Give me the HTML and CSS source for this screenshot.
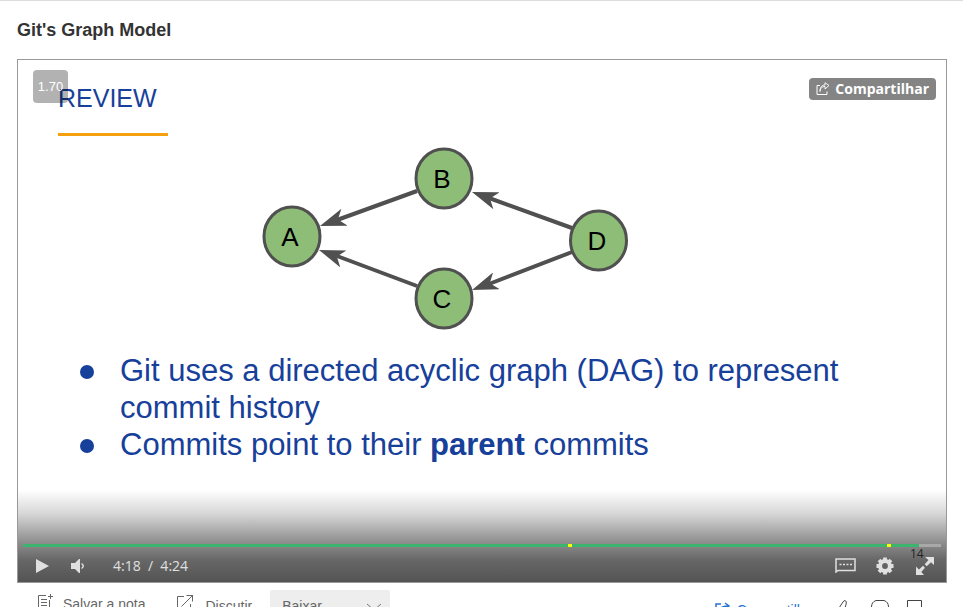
FILE: index.html
```html
<!DOCTYPE html>
<html lang="pt-BR">
<head>
<meta charset="utf-8">
<title>Git's Graph Model</title>
<link rel="stylesheet" href="styles.css">
</head>
<body>
<main class="lesson">
  <h1 class="lesson-title">Git's Graph Model</h1>

  <section class="player">
    <article class="slide">
      <h2 class="slide-title">REVIEW</h2>
      <svg class="graph" width="374" height="188" viewBox="258 144 374 188" role="img" aria-label="A, B, C, D">
        <defs>
          <marker id="arrow" viewBox="0 0 26 18" refX="26" refY="9" markerWidth="26" markerHeight="18" markerUnits="userSpaceOnUse" orient="auto">
            <path d="M0 0L26 9L0 18L7 9Z" fill="#505050"/>
          </marker>
        </defs>
        <g class="edges">
          <path d="M417 191L337 220"/>
          <path d="M417 286L337 256"/>
          <path d="M572 228L489 198"/>
          <path d="M572 252L489 284"/>
        </g>
        <g fill="none" stroke="none">
          <path d="M417 191L320 226" marker-end="url(#arrow)"/>
          <path d="M417 286L319 250" marker-end="url(#arrow)"/>
          <path d="M572 228L472 192" marker-end="url(#arrow)"/>
          <path d="M572 252L472 290" marker-end="url(#arrow)"/>
        </g>
        <g class="nodes">
          <ellipse cx="292" cy="236.500" rx="28" ry="29.500"/>
          <ellipse cx="444" cy="178.500" rx="28" ry="29.500"/>
          <ellipse cx="444" cy="298.500" rx="28" ry="29.500"/>
          <ellipse cx="598.500" cy="240.500" rx="28" ry="29.500"/>
        </g>
        <g class="labels">
          <text x="290" y="246">A</text>
          <text x="442" y="188">B</text>
          <text x="442" y="308">C</text>
          <text x="597" y="250">D</text>
        </g>
      </svg>
      <ul class="points">
        <li><p>Git uses a directed acyclic graph (DAG) to represent commit history</p></li>
        <li><p>Commits point to their <strong>parent</strong> commits</p></li>
      </ul>
    </article>

    <span class="speed">1.70</span>
    <button class="share" type="button">
      <svg width="14" height="14" viewBox="0 0 14 14" fill="none" stroke="currentColor"><path d="M4 3.500H1V12.500H11V9.500"/><path d="M4 9.500C4 6 6 4.500 9 4.500V7L13 3.500L9 .7V3C6 3 4 5 4 9.500Z" stroke-width=".9"/></svg>
      Compartilhar
    </button>

    <div class="controls">
      <div class="progress">
        <div class="progress-played"></div>
        <i class="mark mark-middle"></i>
        <i class="mark mark-late"></i>
      </div>
      <div class="buttons">
        <button class="icon-button" type="button" aria-label="Reproduzir">
          <svg width="14" height="16" viewBox="0 0 14 16"><path d="M0 1L13 8L0 15Z" fill="currentColor"/></svg>
        </button>
        <button class="icon-button volume" type="button" aria-label="Volume">
          <svg width="14" height="14" viewBox="0 0 14 14"><path d="M0 4H4L8 0H9V14H8L4 10H0Z" fill="currentColor"/><path d="M10.500 4.500Q14 7 10.500 9.500" fill="none" stroke="currentColor" stroke-width="1.500"/></svg>
        </button>
        <span class="time">4:18&nbsp; /&nbsp; 4:24</span>
        <button class="icon-button captions" type="button" aria-label="Legendas">
          <svg width="21" height="15" viewBox="0 0 21 15"><path d="M1 14V1H20V12.500H3Z" fill="none" stroke="currentColor" stroke-width="1.500"/><path d="M4.500 6.500H17" stroke="currentColor" stroke-width="1.600" stroke-dasharray="2 1.500"/></svg>
        </button>
        <button class="icon-button" type="button" aria-label="Configurações">
          <svg width="18" height="18" viewBox="0 0 18 18"><g fill="none" stroke="currentColor"><circle cx="9" cy="9" r="4.900" stroke-width="4"/><path d="M9 .5V3M9 15V17.500M.5 9H3M15 9H17.500M3 3L4.800 4.800M13.200 13.200L15 15M3 15L4.800 13.200M13.200 4.800L15 3" stroke-width="3.800"/></g></svg>
        </button>
        <button class="icon-button fullscreen" type="button" aria-label="Tela cheia">
          <svg width="18" height="18" viewBox="0 0 18 18" fill="currentColor"><path d="M9 0H18V8L15 5.300L10.700 9.200L8.700 7.200L12.500 3ZM0 9.500L3 12.500L7 8.800L9 10.800L5.300 14.900L8 18H0Z"/></svg>
          <span class="badge">14</span>
        </button>
      </div>
    </div>
  </section>

  <footer class="toolbar">
    <button class="tool" type="button">
      <svg width="16" height="18" viewBox="0 0 16 18" fill="none" stroke="currentColor"><path d="M9 1.500H1.500V17H12.500V6M13.500 0V5M11 2.500H16M4 5.500H10M4 8.500H10M4 11.500H10"/></svg>
      Salvar a nota
    </button>
    <button class="tool discuss" type="button">
      <svg width="18" height="18" viewBox="0 0 18 18" fill="none" stroke="currentColor"><path d="M8 2.500H1.500V16.500H14.500V10M5.500 12.500L17 1M10.500 1.500H16.500V7.500"/></svg>
      <span>Discutir</span>
    </button>
    <select class="download" aria-label="Baixar"><option>Baixar</option></select>
    <div class="actions">
      <a class="share-link" href="#">
        <svg width="16" height="14" viewBox="0 0 16 14" fill="none" stroke="currentColor" stroke-width="1.500"><path d="M6 4H1V13H12V10M5 10Q5 6 14 6M10 3L14 6L10 9"/></svg>
        Compartilhar
      </a>
      <button class="action" type="button" aria-label="Gostei">
        <svg width="18" height="18" viewBox="0 0 18 18" fill="none" stroke="currentColor"><path d="M1.500 9.500H3L8 2Q9 0 10.500 .8Q12 1.500 11 4.500L10 8H16V17H1.500Z"/></svg>
      </button>
      <button class="action" type="button" aria-label="Comentar">
        <svg width="18" height="18" viewBox="0 0 18 18" fill="none" stroke="currentColor"><path d="M5 .5H13Q17.500 2 17.500 7Q17.500 14 9 14L4 17V13Q.5 11 .5 7Q.5 2 5 .5Z" stroke-linejoin="round"/></svg>
      </button>
      <button class="action" type="button" aria-label="Salvar">
        <svg width="15" height="18" viewBox="0 0 15 18" fill="none" stroke="currentColor"><path d="M.5 .5H14.500V17L7.500 11L.5 17Z"/></svg>
      </button>
    </div>
  </footer>
</main>
</body>
</html>
```
FILE: styles.css
```css
* {
  box-sizing: border-box;
}

html {
  height: 100%;
  overflow: hidden;
}

body {
  margin: 0;
  border-top: 1px solid #dcdcdc;
  background: #fff;
  color: #333;
  font: 14px/20px "Liberation Sans", Arial, sans-serif;
}

button,
select {
  margin: 0;
  padding: 0;
  border: 0;
  background: none;
  color: inherit;
  font: inherit;
}

svg {
  display: block;
  flex: none;
}

.lesson {
  padding: 17px 16px 0 17px;
}

.lesson-title {
  margin: 0 0 17px;
  font-size: 18px;
  line-height: 24px;
}

.player {
  position: relative;
  aspect-ratio: 930 / 524;
  border: 1px solid #999;
  background: #fff;
  overflow: hidden;
}

.slide {
  padding: 22px 40px 0;
  color: #17409a;
}

.slide-title {
  width: 110px;
  margin: 0 0 8px;
  padding-bottom: 19px;
  border-bottom: 3px solid #f5a00f;
  font-weight: 400;
  font-size: 25px;
  line-height: 32px;
}

.graph {
  margin-left: 200px;
}

.edges {
  fill: none;
  stroke: #505050;
  stroke-width: 4;
}

.nodes {
  fill: #8dbd76;
  stroke: #505050;
  stroke-width: 3;
}

.labels {
  fill: #000;
  font-size: 26px;
  text-anchor: middle;
}

.points {
  margin: 20px 0 0;
  padding: 0 0 0 22px;
  list-style: none;
  font-size: 31px;
  line-height: 37px;
}

.points li {
  display: flex;
  gap: 26px;
}

.points li::before {
  content: "";
  flex: none;
  width: 14px;
  height: 14px;
  margin-top: 13px;
  border-radius: 50%;
  background: #17409a;
}

.points p {
  margin: 0;
}

.speed {
  position: absolute;
  top: 10px;
  left: 15px;
  width: 35px;
  height: 33px;
  border-radius: 4px;
  background: rgba(0, 0, 0, 0.3);
  color: #fff;
  font-size: 13px;
  line-height: 33px;
  text-align: center;
}

.share {
  position: absolute;
  top: 18px;
  right: 10px;
  display: flex;
  align-items: center;
  gap: 5px;
  height: 22px;
  padding: 0 7px 0 7px;
  border-radius: 4px;
  background: #848484;
  color: #fff;
  font: 700 14px/22px "Open Sans", sans-serif;
}

.controls {
  position: absolute;
  inset: auto 0 0;
  padding: 54px 5px 0;
  background: linear-gradient(transparent, rgba(60, 60, 60, 0.2) 25%, rgba(60, 60, 60, 0.58) 57%, rgba(60, 60, 60, 0.78) 76%, rgba(60, 60, 60, 0.88));
  color: #e0e0e0;
}

.progress {
  position: relative;
  height: 3px;
  background: #a8a8a8;
}

.progress-played {
  width: 97.6%;
  height: 100%;
  background: #3cb46e;
}

.mark {
  position: absolute;
  top: 0;
  width: 4px;
  height: 3px;
  background: #ff0;
}

.mark-middle {
  left: 59.4%;
}

.mark-late {
  left: 94.1%;
}

.buttons {
  display: flex;
  align-items: center;
  height: 35px;
  padding: 2px 7px 0 13px;
}

.icon-button {
  position: relative;
}

.volume {
  margin: 0 28px 0 21px;
}

.time {
  font: 14px/20px "Open Sans", sans-serif;
}

.captions {
  margin: 0 20px 0 auto;
}

.fullscreen {
  margin-left: 22px;
}

.badge {
  position: absolute;
  top: -11px;
  left: -6px;
  color: #222;
  font: 12px/16px "Open Sans", sans-serif;
}

.toolbar {
  display: flex;
  align-items: flex-start;
  padding: 7px 25px 0 20px;
  color: #666;
}

.tool {
  display: flex;
  gap: 10px;
  padding-top: 4px;
}

.discuss {
  margin: 0 18px 0 30px;
  gap: 12px;
}

.discuss span {
  padding-top: 2px;
}

.download {
  appearance: none;
  width: 120px;
  height: 32px;
  padding: 0 12px;
  border-radius: 2px;
  background: #eee url("data:image/svg+xml,%3Csvg xmlns='http://www.w3.org/2000/svg' width='16' height='8' fill='none' stroke='%23777'%3E%3Cpath d='M1 1L8 7L15 1'/%3E%3C/svg%3E") no-repeat right 8px top 13px;
}

.actions {
  display: flex;
  align-items: flex-start;
  gap: 18px;
  margin-left: auto;
  padding-top: 10px;
  color: #444;
}

.share-link {
  display: flex;
  gap: 6px;
  color: #2a73cc;
  text-decoration: none;
}
```
